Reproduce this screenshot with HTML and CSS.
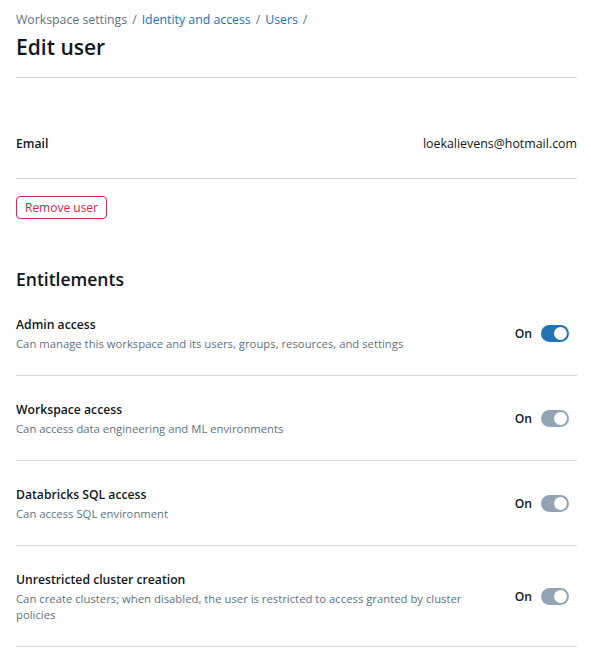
FILE: index.html
```html
<!DOCTYPE html>
<html lang="en">
<head>
<meta charset="utf-8">
<title>Edit user</title>
<link rel="stylesheet" href="styles.css">
</head>
<body>
<div class="page">
  <header class="page-header">
    <nav class="breadcrumb">
      <span class="crumb-muted">Workspace settings</span><span class="sep">/</span><a class="crumb" href="#">Identity and access</a><span class="sep">/</span><a class="crumb" href="#">Users</a><span class="sep">/</span>
    </nav>
    <h1 class="title">Edit user</h1>
  </header>

  <section class="info-row">
    <span class="info-label">Email</span>
    <span class="info-value">loekalievens@hotmail.com</span>
  </section>

  <div class="actions">
    <button class="btn-danger" type="button">Remove user</button>
  </div>

  <h2 class="section-title">Entitlements</h2>

  <div class="ent-list">
    <div class="ent-row">
      <div class="ent-text">
        <div class="ent-title">Admin access</div>
        <div class="ent-desc">Can manage this workspace and its users, groups, resources, and settings</div>
      </div>
      <div class="ent-control">
        <span class="ent-state">On</span>
        <span class="switch switch-on"><span class="knob"></span></span>
      </div>
    </div>
    <div class="ent-row">
      <div class="ent-text">
        <div class="ent-title">Workspace access</div>
        <div class="ent-desc">Can access data engineering and ML environments</div>
      </div>
      <div class="ent-control">
        <span class="ent-state">On</span>
        <span class="switch switch-disabled"><span class="knob"></span></span>
      </div>
    </div>
    <div class="ent-row">
      <div class="ent-text">
        <div class="ent-title">Databricks SQL access</div>
        <div class="ent-desc">Can access SQL environment</div>
      </div>
      <div class="ent-control">
        <span class="ent-state">On</span>
        <span class="switch switch-disabled"><span class="knob"></span></span>
      </div>
    </div>
    <div class="ent-row">
      <div class="ent-text">
        <div class="ent-title">Unrestricted cluster creation</div>
        <div class="ent-desc">Can create clusters; when disabled, the user is restricted to access granted by cluster policies</div>
      </div>
      <div class="ent-control">
        <span class="ent-state">On</span>
        <span class="switch switch-disabled"><span class="knob"></span></span>
      </div>
    </div>
  </div>
</div>
</body>
</html>
```

FILE: styles.css
```css
* { box-sizing: border-box; }

html, body {
  margin: 0;
  padding: 0;
  background: #ffffff;
}

body {
  font-family: "Open Sans", "Noto Sans", sans-serif;
  color: #11171c;
  font-size: 12.4px;
}

.page {
  padding: 10px 14px 0 16px;
}

.page-header {
  border-bottom: 1px solid #d1d9e1;
  padding-bottom: 15px;
}

.breadcrumb {
  font-size: 12.3px;
  line-height: 20px;
  color: #5f7281;
}

.crumb {
  color: #2272b4;
  text-decoration: none;
}

.crumb-muted { color: #5f7281; }

.sep {
  color: #5f7281;
  margin: 0 5px;
}

.title {
  margin: 2px 0 0;
  font-size: 21px;
  line-height: 30px;
  font-weight: 600;
}

.info-row {
  display: flex;
  justify-content: space-between;
  align-items: center;
  margin-top: 56px;
  padding-bottom: 24px;
  border-bottom: 1px solid #d1d9e1;
  line-height: 20px;
}

.info-label {
  font-weight: 600;
  font-size: 12.2px;
}

.info-value {
  font-size: 12.4px;
}

.actions {
  margin-top: 17px;
}

.btn-danger {
  font-family: inherit;
  font-size: 12px;
  line-height: 19px;
  height: 23px;
  width: 91px;
  padding: 0;
  color: #c82d4c;
  background: #ffffff;
  border: 1px solid #c82d4c;
  border-radius: 4px;
}

.section-title {
  margin: 48px 0 0;
  font-size: 17.5px;
  line-height: 24px;
  font-weight: 600;
}

.ent-row {
  display: flex;
  align-items: center;
  gap: 20px;
  padding: 24px 0 23px;
  border-bottom: 1px solid #d1d9e1;
}

.ent-text {
  flex: 1;
  max-width: 470px;
}

.ent-title {
  font-size: 12.2px;
  line-height: 20px;
  font-weight: 600;
}

.ent-desc {
  margin-top: 1px;
  font-size: 11.3px;
  line-height: 16px;
  color: #5f7281;
}

.ent-control {
  margin-left: auto;
  display: flex;
  align-items: center;
  gap: 9px;
  padding-right: 8px;
}

.ent-state {
  font-size: 12.2px;
  line-height: 20px;
  font-weight: 600;
}

.switch {
  position: relative;
  display: inline-block;
  width: 28px;
  height: 17px;
  border-radius: 9px;
}

.switch-on { background: #2272b4; }
.switch-disabled { background: #92a4b3; }

.knob {
  position: absolute;
  top: 2px;
  right: 2px;
  width: 13px;
  height: 13px;
  border-radius: 50%;
  background: #ffffff;
}
```
